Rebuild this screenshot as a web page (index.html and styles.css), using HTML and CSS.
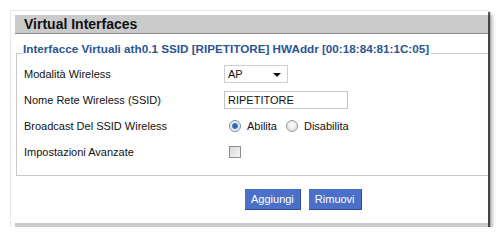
FILE: index.html
```html
<!DOCTYPE html>
<html lang="it">
<head>
  <meta charset="UTF-8"/>
  <title>Virtual Interfaces</title>
  <link rel="stylesheet" href="styles.css">
</head>
<body>
  <div class="frame">
    <div class="bar">Virtual Interfaces</div>
    <fieldset class="box">
      <legend>Interfacce Virtuali ath0.1 SSID [RIPETITORE] HWAddr [00:18:84:81:1C:05]</legend>
      <div class="row first">
        <div class="lbl">Modalità Wireless</div>
        <div class="sel">AP <span class="arrow"></span></div>
      </div>
      <div class="row">
        <div class="lbl">Nome Rete Wireless (SSID)</div>
        <div class="txt">RIPETITORE</div>
      </div>
      <div class="row">
        <div class="lbl">Broadcast Del SSID Wireless</div>
        <div class="opts">
          <span class="radio on"></span><span class="opt">Abilita</span>
          <span class="radio"></span><span class="opt">Disabilita</span>
        </div>
      </div>
      <div class="row">
        <div class="lbl">Impostazioni Avanzate</div>
        <span class="check"></span>
      </div>
    </fieldset>
    <div class="actions">
      <span class="btn">Aggiungi</span>
      <span class="btn">Rimuovi</span>
    </div>
    <div class="bar bottom"></div>
  </div>
</body>
</html>
```

FILE: styles.css
```css
body { margin: 0; background: #fff; font-family: "Liberation Sans", Arial, sans-serif; font-size: 11px; color: #111; }
.frame { margin: 10px 0 0 10px; width: 478px; height: 217px; background: #fff; border-left: 1px solid #e8e8e8; border-top: 1px solid #e8e8e8; box-shadow: 2px 2px 1px rgba(0,0,0,0.6), 4px 4px 4px rgba(0,0,0,0.35); padding: 4px 0 0 4px; box-sizing: border-box; overflow: hidden; }
.bar { height: 18px; background: #cbcbcb; border-bottom: 1px solid #8e8e8e; font-weight: bold; font-size: 14px; line-height: 19px; padding-left: 9px; color: #111; }
.box { margin: 8px 0 0 1px; padding: 0 0 10px 7px; border: 1px solid #c8c8c8; width: 480px; box-sizing: border-box; }
.box legend { color: #2a5592; font-weight: bold; font-size: 11.7px; line-height: 14px; padding: 0 2px 8px 0; margin-left: -1px; }
.row { display: flex; align-items: center; height: 26px; }
.row.first { margin-top: -3px; }
.lbl { width: 200px; }
.sel { width: 64px; height: 18px; border: 1px solid #cfcfcf; box-sizing: border-box; padding-left: 3px; line-height: 16px; position: relative; }
.arrow { position: absolute; right: 6px; top: 7px; border-left: 4px solid transparent; border-right: 4px solid transparent; border-top: 4px solid #111; }
.txt { width: 124px; height: 18px; border: 1px solid #c4c4c4; box-sizing: border-box; padding-left: 3px; line-height: 16px; }
.opts { display: flex; align-items: center; padding-left: 5px; }
.radio { width: 12px; height: 12px; border-radius: 50%; border: 1px solid #9a9a9a; box-sizing: border-box; background: radial-gradient(circle at 50% 40%, #fff, #d6d6d6); }
.radio.on { background: radial-gradient(circle, #1f4f9a 0, #3d7cc9 2.5px, #dfe9f5 3.5px, #f2f2f2 5px); border-color: #7a8ca6; }
.opt { margin: 0 9px 0 6px; }
.check { width: 12px; height: 12px; margin-left: 5px; border: 1px solid #8f8f8f; box-sizing: border-box; background: linear-gradient(135deg, #d8d8d8, #f6f6f6); }
.actions { display: flex; gap: 8px; padding: 13px 0 0 230px; height: 21px; }
.btn { background: #4a70c8; color: #fff; height: 20px; line-height: 20px; padding: 0 6px; border-right: 1px solid #2e4f95; border-bottom: 1px solid #2e4f95; }
.bar.bottom { margin-top: 13px; }
```
